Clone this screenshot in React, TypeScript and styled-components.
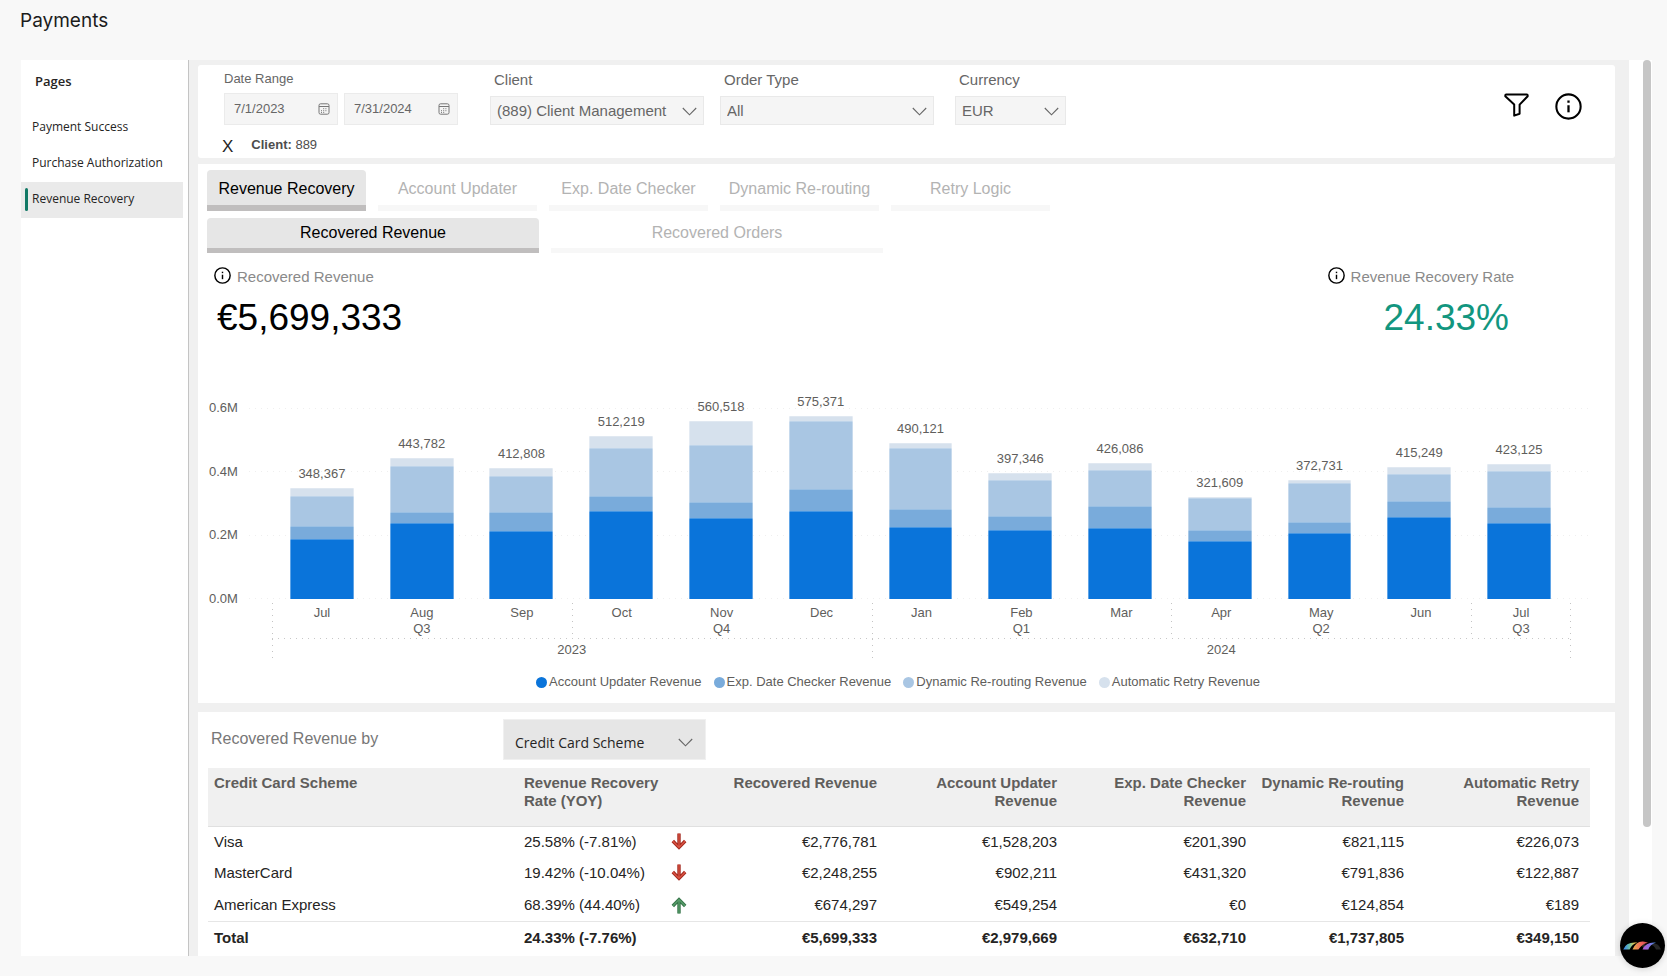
import React from "react";
import styled, { createGlobalStyle, css } from "styled-components";

const sans = `"Liberation Sans", Arial, sans-serif`;
const segoe = `"Open Sans", "Segoe UI", sans-serif`;

const series = [
  { name: "Account Updater Revenue", color: "#0a74da" },
  { name: "Exp. Date Checker Revenue", color: "#79abdb" },
  { name: "Dynamic Re-routing Revenue", color: "#a9c6e3" },
  { name: "Automatic Retry Revenue", color: "#d6e1ed" },
];

type Month = { name: string; total: number; parts: number[] };
type Quarter = { name: string; months: Month[] };
type Year = { name: string; quarters: Quarter[] };

const m = (name: string, total: number, a: number, b: number, c: number): Month => ({
  name,
  total,
  parts: [a, b - a, c - b, total - c],
});

const years: Year[] = [
  {
    name: "2023",
    quarters: [
      {
        name: "Q3",
        months: [
          m("Jul", 348367, 187400, 229300, 324600),
          m("Aug", 443782, 237700, 272200, 416700),
          m("Sep", 412808, 212600, 272200, 385300),
        ],
      },
      {
        name: "Q4",
        months: [
          m("Oct", 512219, 277500, 323600, 473300),
          m("Nov", 560518, 253400, 303700, 482700),
          m("Dec", 575371, 276400, 344500, 558100),
        ],
      },
    ],
  },
  {
    name: "2024",
    quarters: [
      {
        name: "Q1",
        months: [
          m("Jan", 490121, 225100, 281700, 473300),
          m("Feb", 397346, 216800, 259700, 372800),
          m("Mar", 426086, 223000, 292100, 404200),
        ],
      },
      {
        name: "Q2",
        months: [
          m("Apr", 321609, 181100, 217800, 316200),
          m("May", 372731, 206300, 240800, 363300),
          m("Jun", 415249, 256500, 306800, 393700),
        ],
      },
      { name: "Q3", months: [m("Jul", 423125, 237700, 288000, 403100)] },
    ],
  },
];

const allMonths = years.flatMap((y) => y.quarters.flatMap((q) => q.months));
const PX_PER_UNIT = 191 / 600000;
const ticks = ["0.6M", "0.4M", "0.2M", "0.0M"];

const rows = [
  { name: "Visa", rate: "25.58% (-7.81%)", up: false, v: ["€2,776,781", "€1,528,203", "€201,390", "€821,115", "€226,073"] },
  { name: "MasterCard", rate: "19.42% (-10.04%)", up: false, v: ["€2,248,255", "€902,211", "€431,320", "€791,836", "€122,887"] },
  { name: "American Express", rate: "68.39% (44.40%)", up: true, v: ["€674,297", "€549,254", "€0", "€124,854", "€189"] },
];
const totals = ["€5,699,333", "€2,979,669", "€632,710", "€1,737,805", "€349,150"];
const valueHeads = ["Recovered Revenue", ...series.map((s) => s.name)];

const Global = createGlobalStyle`
  *, *::before, *::after { box-sizing: border-box; }
  body { margin: 0; background: #f8f8f8; font-family: ${sans}; color: #252423; }
  button, input, select { font: inherit; color: inherit; margin: 0; }
`;

const Page = styled.div`
  min-height: 100vh;
  padding-bottom: 20px;
`;
const Title = styled.h1`
  margin: 0;
  padding: 9px 20px 27px;
  font: 400 19px/24px Inter, ${sans};
  color: #1c1c1c;
`;
const Frame = styled.div`
  display: flex;
  margin: 0 15px 0 21px;
  background: #fff;
`;
const Sidebar = styled.nav`
  flex: 0 0 168px;
  padding-right: 5px;
  border-right: 1px solid #c4c4c4;
  font-family: ${segoe};
`;
const SidebarTitle = styled.h2`
  margin: 0;
  padding: 12px 14px 20px;
  font-size: 13px;
  line-height: 18px;
  font-weight: 600;
  color: #252423;
`;
const NavLink = styled.a<{ $active?: boolean }>`
  display: flex;
  align-items: center;
  gap: 4px;
  height: 36px;
  padding: 0 0 2px 4px;
  font-size: 12px;
  line-height: 16px;
  white-space: nowrap;
  text-decoration: none;
  color: #252423;
  background: ${(p) => (p.$active ? "#eaeaea" : "transparent")};
  &::before {
    content: "";
    width: 3px;
    height: 23px;
    border-radius: 2px;
    background: ${(p) => (p.$active ? "#117865" : "transparent")};
  }
`;
const Report = styled.main`
  flex: 1;
  min-width: 0;
  display: flex;
  flex-direction: column;
  padding: 5px 14px 0 9px;
  background: #f0f0f0;
`;
const ScrollTrack = styled.div`
  flex: 0 0 23px;
  padding-left: 14px;
`;
const ScrollThumb = styled.div`
  width: 8px;
  height: calc(100% - 129px);
  border-radius: 4px;
  background: #c6c6c6;
`;

const FilterCard = styled.section`
  display: flex;
  justify-content: space-between;
  height: 93px;
  padding: 0 33px 0 26px;
  margin-bottom: 6px;
  border-radius: 3px;
  background: #fff;
`;
const FilterGrid = styled.div`
  display: grid;
  grid-template-columns: 266px 230px 235px 111px;
  grid-template-rows: 60px 1fr;
`;
const DateGroup = styled.fieldset`
  margin: 0;
  padding: 6px 0 0;
  border: 0;
  min-width: 0;
  font-size: 13px;
  line-height: 16px;
  color: #666;
`;
const Legend = styled.legend`
  float: left;
  width: 100%;
  padding: 0;
  margin-bottom: 6px;
`;
const DateRow = styled.div`
  clear: both;
  display: flex;
  gap: 6px;
`;
const DateBox = styled.label`
  display: flex;
  align-items: center;
  width: 114px;
  height: 32px;
  padding: 0 7px 0 9px;
  border: 1px solid #ebebeb;
  background: #f5f5f5;
`;
const DateInput = styled.input`
  flex: 1;
  min-width: 0;
  padding: 0;
  border: 0;
  outline: 0;
  background: none;
`;
const Field = styled.label`
  padding-top: 6px;
  font-size: 15px;
  line-height: 18px;
  color: #666;
`;
const FieldName = styled.span`
  display: block;
  padding-left: 4px;
  margin-bottom: 7px;
`;
const SelectBox = styled.span<{ $width: number; $large?: boolean }>`
  display: grid;
  align-items: center;
  justify-items: end;
  width: ${(p) => p.$width}px;
  > * {
    grid-area: 1 / 1;
  }
  > svg {
    margin: ${(p) => (p.$large ? "6px 13px 0 0" : "2px 7px 0 0")};
    pointer-events: none;
  }
`;
const Select = styled.select<{ $large?: boolean }>`
  appearance: none;
  width: 100%;
  height: 29px;
  padding: 0 24px 0 6px;
  border: 1px solid #e9e9e9;
  border-radius: 0;
  background: #f5f5f5;
  ${(p) =>
    p.$large &&
    css`
      height: 41px;
      padding: 7px 24px 0 11px;
      border-color: #f0f0f0;
      background: #e6e6e6;
      font: 400 14px/20px ${segoe};
      color: #252423;
    `}
`;
const Applied = styled.div`
  display: flex;
  align-items: center;
  gap: 17px;
  height: 24px;
  margin: 8px 0 0 -3px;
  font-size: 13px;
  line-height: 16px;
  color: #4d4d4d;
`;
const ClearButton = styled.button`
  padding: 4px 1px 0;
  border: 0;
  background: none;
  font-size: 17px;
  line-height: 20px;
  color: #252423;
`;
const IconRow = styled.div`
  display: flex;
  align-items: flex-start;
  gap: 26px;
  padding-top: 28px;
`;
const IconButton = styled.button`
  display: flex;
  padding: 0;
  border: 0;
  background: none;
  color: #000;
`;

const ChartCard = styled.section`
  padding: 6px 0 13px 9px;
  margin-bottom: 9px;
  background: #fff;
`;
const Tabs = styled.div`
  display: flex;
  gap: 12px;
  margin-bottom: 7px;
`;
const Tab = styled.button<{ $active?: boolean; $wide?: boolean }>`
  width: ${(p) => (p.$wide ? 332 : 159)}px;
  height: ${(p) => (p.$wide ? 35 : 41)}px;
  padding: ${(p) => (p.$wide ? "0 0 1px" : "2px 0 0")};
  border: 0;
  border-bottom: ${(p) => (p.$wide ? 5 : 6)}px solid ${(p) => (p.$active ? "#c0bebe" : "#f7f7f7")};
  border-radius: 4px 4px 0 0;
  background: ${(p) => (p.$active ? "#e6e6e6" : "#fff")};
  font-size: 16px;
  line-height: 20px;
  white-space: nowrap;
  color: ${(p) => (p.$active ? "#000" : "#b3b3b3")};
`;
const Kpis = styled.div`
  display: flex;
  justify-content: space-between;
  padding: 7px 101px 52px 7px;
`;
const Kpi = styled.div<{ $right?: boolean }>`
  text-align: ${(p) => (p.$right ? "right" : "left")};
`;
const KpiName = styled.div`
  display: flex;
  align-items: center;
  gap: 6px;
  font-size: 15px;
  line-height: 18px;
  color: #8a8a8a;
  > svg {
    margin-bottom: 2px;
    color: #000;
  }
`;
const KpiValue = styled.div<{ $color: string }>`
  padding: 10px 5px 0 3px;
  font-size: 37px;
  line-height: 44px;
  color: ${(p) => p.$color};
`;

const Plot = styled.div`
  display: grid;
  height: 215px;
  margin-right: 24px;
  font-size: 13px;
  line-height: 16px;
  color: #605e5c;
  > * {
    grid-area: 1 / 1;
  }
`;
const Ticks = styled.div`
  align-self: end;
  display: flex;
  flex-direction: column;
  justify-content: space-between;
  height: 207px;
`;
const Tick = styled.div`
  display: flex;
  align-items: center;
  &::after {
    content: "";
    flex: 1;
    height: 1px;
    background: repeating-linear-gradient(to right, #efefef 0 1px, transparent 1px 6px);
  }
`;
const TickLabel = styled.span`
  width: 42px;
  padding-left: 2px;
`;
const Bars = styled.div`
  display: flex;
  padding: 0 22px 8px 65px;
`;
const BarSlot = styled.div`
  flex: 1;
  display: flex;
  flex-direction: column;
  justify-content: flex-end;
  align-items: center;
`;
const BarTotal = styled.span`
  margin-bottom: 6px;
`;
const Bar = styled.div`
  display: flex;
  flex-direction: column-reverse;
  width: 64%;
`;
const Segment = styled.div<{ $color: string }>`
  background: ${(p) => p.$color};
  box-shadow: inset 0 1px rgba(255, 255, 255, 0.25), inset 1px 0 rgba(255, 255, 255, 0.35),
    inset -1px 0 rgba(255, 255, 255, 0.35);
`;

const vLine = "repeating-linear-gradient(to bottom, #c4c4c4 0 1px, transparent 1px 6px)";
const hLine = "repeating-linear-gradient(to right, #c8c8c8 0 1px, transparent 1px 6px)";
const Axis = styled.div`
  display: flex;
  margin: -4px 44px 0 65px;
  font-size: 13px;
  line-height: 16px;
  text-align: center;
  color: #605e5c;
  background: ${vLine} right / 1px 100% no-repeat;
`;
const AxisYear = styled.div<{ $span: number }>`
  flex: ${(p) => p.$span} 0 0;
  padding-bottom: 1px;
  background: ${vLine} left / 1px 100% no-repeat;
`;
const AxisQuarters = styled.div`
  display: flex;
  padding-bottom: 2px;
  margin-bottom: 3px;
  background: ${hLine} bottom / 100% 1px no-repeat;
`;
const AxisQuarter = styled.div<{ $span: number }>`
  flex: ${(p) => p.$span} 0 0;
  padding-top: 2px;
  & + & {
    background: ${vLine} left / 1px 100% no-repeat;
  }
`;
const AxisMonths = styled.div`
  display: flex;
  > span {
    flex: 1;
  }
`;
const ChartLegend = styled.ul`
  display: flex;
  justify-content: center;
  gap: 12px;
  margin: 15px 0 0;
  padding: 0 26px 0 0;
  list-style: none;
  font-size: 13px;
  line-height: 16px;
  color: #605e5c;
`;
const LegendItem = styled.li<{ $color: string }>`
  display: flex;
  align-items: center;
  gap: 2px;
  &::before {
    content: "";
    width: 11px;
    height: 11px;
    border-radius: 50%;
    background: ${(p) => p.$color};
  }
`;

const TableCard = styled.section`
  flex: 1;
  padding: 7px 25px 1px 10px;
  background: #fff;
`;
const TableBar = styled.div`
  display: grid;
  grid-template-columns: 295px auto;
  justify-content: start;
  margin-bottom: 8px;
`;
const TableTitle = styled.label`
  padding: 10px 0 0 3px;
  font-size: 16px;
  line-height: 20px;
  color: #777;
`;
const Table = styled.table`
  width: 100%;
  table-layout: fixed;
  border-collapse: collapse;
  font-size: 15px;
  line-height: 18px;
  text-align: right;
  th, td {
    padding: 0 5px 0 6px;
  }
  th:last-child, td:last-child {
    padding-right: 11px;
  }
  thead th {
    height: 58px;
    padding-top: 6px;
    vertical-align: top;
    font-weight: 700;
    color: #605e5c;
    background: #f0f0f0;
    border-bottom: 1px solid #e0e0e0;
  }
  tbody th {
    font-weight: 400;
  }
  tbody th, tbody td {
    height: 31px;
  }
  tbody tr:last-child > * {
    height: 33px;
    padding-top: 2px;
  }
  tfoot th, tfoot td {
    height: 34px;
    font-weight: 700;
    border-top: 1px solid #e6e6e6;
  }
  th:first-child, th:nth-child(2), td:nth-child(2) {
    text-align: left;
  }
`;
const Rate = styled.div`
  display: flex;
  justify-content: space-between;
  align-items: center;
  padding-right: 2px;
`;
const ChatBadge = styled.button`
  position: fixed;
  right: 2px;
  bottom: 8px;
  display: flex;
  align-items: center;
  justify-content: center;
  width: 45px;
  height: 45px;
  padding: 0;
  border: 0;
  border-radius: 50%;
  background: #000;
  box-shadow: 0 1px 6px rgba(0, 0, 0, 0.16);
`;

const Chevron = () => (
  <svg width="15" height="9" viewBox="0 0 15 9" fill="none" stroke="#666" strokeWidth="1.1">
    <path d="M0.8 1 L7.5 7.8 L14.2 1" />
  </svg>
);
const Calendar = () => (
  <svg width="12" height="12" viewBox="0 0 12 12" fill="none" stroke="#777">
    <rect x="1" y="0.8" width="10" height="10.4" rx="1.6" />
    <path d="M1 3.5H11" />
    <path d="M5.2 5.7h1M7.4 5.7h1M3 7.7h1M5.2 7.7h1M7.4 7.7h1M3 9.4h1M5.2 9.4h1" strokeWidth="1" />
  </svg>
);
const Funnel = () => (
  <svg width="25" height="25" viewBox="0 0 25 25" fill="none" stroke="currentColor" strokeWidth="2" strokeLinejoin="round">
    <path d="M1.3 2.4 Q1.3 1.6 2.2 1.6 H22.8 Q23.7 1.6 23.7 2.4 V3.2 L15.6 11.6 V20.8 L10.2 22.6 V11.6 L1.3 3.2 Z" />
  </svg>
);
const Info = ({ size, stroke }: { size: number; stroke: number }) => (
  <svg width={size} height={size} viewBox="0 0 26 26" fill="none" stroke="currentColor" strokeWidth={stroke}>
    <circle cx="13" cy="13" r="11.7" />
    <path d="M13 11.8V18.6" strokeWidth="2.2" />
    <path d="M13 7.2V9.4" strokeWidth="2.2" />
  </svg>
);
const Trend = ({ up }: { up: boolean }) => {
  const d = up ? "M8 16.4V3M1.8 9L8 2.6L14.2 9" : "M8 0.6V14M1.8 8L8 14.4L14.2 8";
  return (
    <svg width="16" height="17" viewBox="0 0 16 17" fill="none" role="img" aria-label={up ? "Up" : "Down"}>
      <path d={d} stroke={up ? "#37764a" : "#a42a20"} strokeWidth="3.4" />
      <path d={d} stroke={up ? "#5a9f6c" : "#dd5544"} strokeWidth="1.2" />
    </svg>
  );
};
const Arches = () => (
  <svg width="39" height="9" viewBox="0 0 39 9" fill="none">
    <defs>
      <linearGradient id="arch1" x1="0" x2="1">
        <stop offset="0.1" stopColor="#3d8fe6" />
        <stop offset="0.45" stopColor="#6cc0a0" />
        <stop offset="0.8" stopColor="#f2c94c" />
      </linearGradient>
      <linearGradient id="arch2" x1="0" x2="1">
        <stop offset="0" stopColor="#e8b04a" />
        <stop offset="0.6" stopColor="#f0605c" />
        <stop offset="1" stopColor="#c04848" />
      </linearGradient>
      <linearGradient id="arch3" x1="0" x2="1">
        <stop offset="0" stopColor="#b45bd0" />
        <stop offset="0.5" stopColor="#8a70e0" />
        <stop offset="1" stopColor="#3f8fe0" />
      </linearGradient>
    </defs>
    <path d="M27 2.6 Q35 0.5 38 8.5 H33 Q31 4 27 3.6Z" fill="#262626" />
    <path d="M17 3 Q24 2 26 8.5 H21.5 Q20 5 17 4Z" fill="#2c2c2c" />
    <path d="M19.5 8.5 Q23 0.5 33 1.5 Q27 3.4 25.2 8.5Z" fill="url(#arch3)" />
    <path d="M9.5 8.5 Q13 0 20 0.4 Q23 0.6 25 1.8 Q19 3 15.4 8.5Z" fill="url(#arch2)" />
    <path d="M0.3 8.5 Q3 0.4 14.5 1.6 Q9 3 6.6 8.5Z" fill="url(#arch1)" />
  </svg>
);

export default function App() {
  return (
    <Page>
      <Global />
      <Title>Payments</Title>
      <Frame>
        <Sidebar aria-label="Pages">
          <SidebarTitle>Pages</SidebarTitle>
          <NavLink href="#payment-success">Payment Success</NavLink>
          <NavLink href="#purchase-authorization">Purchase Authorization</NavLink>
          <NavLink href="#revenue-recovery" $active aria-current="page">
            Revenue Recovery
          </NavLink>
        </Sidebar>
        <Report>
          <FilterCard>
            <FilterGrid>
              <DateGroup>
                <Legend>Date Range</Legend>
                <DateRow>
                  <DateBox>
                    <DateInput defaultValue="7/1/2023" aria-label="Start date" />
                    <Calendar />
                  </DateBox>
                  <DateBox>
                    <DateInput defaultValue="7/31/2024" aria-label="End date" />
                    <Calendar />
                  </DateBox>
                </DateRow>
              </DateGroup>
              <Field>
                <FieldName>Client</FieldName>
                <SelectBox $width={214}>
                  <Select>
                    <option>(889) Client Management</option>
                  </Select>
                  <Chevron />
                </SelectBox>
              </Field>
              <Field>
                <FieldName>Order Type</FieldName>
                <SelectBox $width={214}>
                  <Select>
                    <option>All</option>
                  </Select>
                  <Chevron />
                </SelectBox>
              </Field>
              <Field>
                <FieldName>Currency</FieldName>
                <SelectBox $width={111}>
                  <Select>
                    <option>EUR</option>
                  </Select>
                  <Chevron />
                </SelectBox>
              </Field>
              <Applied>
                <ClearButton aria-label="Clear filters">X</ClearButton>
                <span>
                  <b>Client:</b> 889
                </span>
              </Applied>
            </FilterGrid>
            <IconRow>
              <IconButton aria-label="Filters">
                <Funnel />
              </IconButton>
              <IconButton aria-label="Information">
                <Info size={27} stroke={2} />
              </IconButton>
            </IconRow>
          </FilterCard>

          <ChartCard>
            <Tabs>
              <Tab $active>Revenue Recovery</Tab>
              <Tab>Account Updater</Tab>
              <Tab>Exp. Date Checker</Tab>
              <Tab>Dynamic Re-routing</Tab>
              <Tab>Retry Logic</Tab>
            </Tabs>
            <Tabs>
              <Tab $wide $active>
                Recovered Revenue
              </Tab>
              <Tab $wide>Recovered Orders</Tab>
            </Tabs>
            <Kpis>
              <Kpi>
                <KpiName>
                  <Info size={17} stroke={2.2} />
                  Recovered Revenue
                </KpiName>
                <KpiValue $color="#000">€5,699,333</KpiValue>
              </Kpi>
              <Kpi $right>
                <KpiName>
                  <Info size={17} stroke={2.2} />
                  Revenue Recovery Rate
                </KpiName>
                <KpiValue $color="#12967f">24.33%</KpiValue>
              </Kpi>
            </Kpis>
            <Plot>
              <Ticks>
                {ticks.map((t) => (
                  <Tick key={t}>
                    <TickLabel>{t}</TickLabel>
                  </Tick>
                ))}
              </Ticks>
              <Bars>
                {allMonths.map((month, i) => (
                  <BarSlot key={i}>
                    <BarTotal>{month.total.toLocaleString("en-US")}</BarTotal>
                    <Bar>
                      {month.parts.map((part, s) => (
                        <Segment key={s} $color={series[s].color} style={{ height: part * PX_PER_UNIT }} />
                      ))}
                    </Bar>
                  </BarSlot>
                ))}
              </Bars>
            </Plot>
            <Axis>
              {years.map((y) => (
                <AxisYear key={y.name} $span={y.quarters.reduce((n, q) => n + q.months.length, 0)}>
                  <AxisQuarters>
                    {y.quarters.map((q) => (
                      <AxisQuarter key={q.name} $span={q.months.length}>
                        <AxisMonths>
                          {q.months.map((month) => (
                            <span key={month.name}>{month.name}</span>
                          ))}
                        </AxisMonths>
                        {q.name}
                      </AxisQuarter>
                    ))}
                  </AxisQuarters>
                  {y.name}
                </AxisYear>
              ))}
            </Axis>
            <ChartLegend>
              {series.map((s) => (
                <LegendItem key={s.name} $color={s.color}>
                  {s.name}
                </LegendItem>
              ))}
            </ChartLegend>
          </ChartCard>

          <TableCard>
            <TableBar>
              <TableTitle htmlFor="group-by">Recovered Revenue by</TableTitle>
              <SelectBox $width={203} $large>
                <Select id="group-by" $large>
                  <option>Credit Card Scheme</option>
                </Select>
                <Chevron />
              </SelectBox>
            </TableBar>
            <Table>
              <colgroup>
                {[310, 176, 188, 180, 189, 158, 181].map((w, i) => (
                  <col key={i} width={w} />
                ))}
              </colgroup>
              <thead>
                <tr>
                  <th scope="col">Credit Card Scheme</th>
                  <th scope="col">Revenue Recovery Rate (YOY)</th>
                  {valueHeads.map((h) => (
                    <th scope="col" key={h}>
                      {h}
                    </th>
                  ))}
                </tr>
              </thead>
              <tbody>
                {rows.map((r) => (
                  <tr key={r.name}>
                    <th scope="row">{r.name}</th>
                    <td>
                      <Rate>
                        {r.rate}
                        <Trend up={r.up} />
                      </Rate>
                    </td>
                    {r.v.map((v, i) => (
                      <td key={i}>{v}</td>
                    ))}
                  </tr>
                ))}
              </tbody>
              <tfoot>
                <tr>
                  <th scope="row">Total</th>
                  <td>24.33% (-7.76%)</td>
                  {totals.map((v) => (
                    <td key={v}>{v}</td>
                  ))}
                </tr>
              </tfoot>
            </Table>
          </TableCard>
        </Report>
        <ScrollTrack>
          <ScrollThumb />
        </ScrollTrack>
      </Frame>
      <ChatBadge aria-label="Open assistant">
        <Arches />
      </ChatBadge>
    </Page>
  );
}
